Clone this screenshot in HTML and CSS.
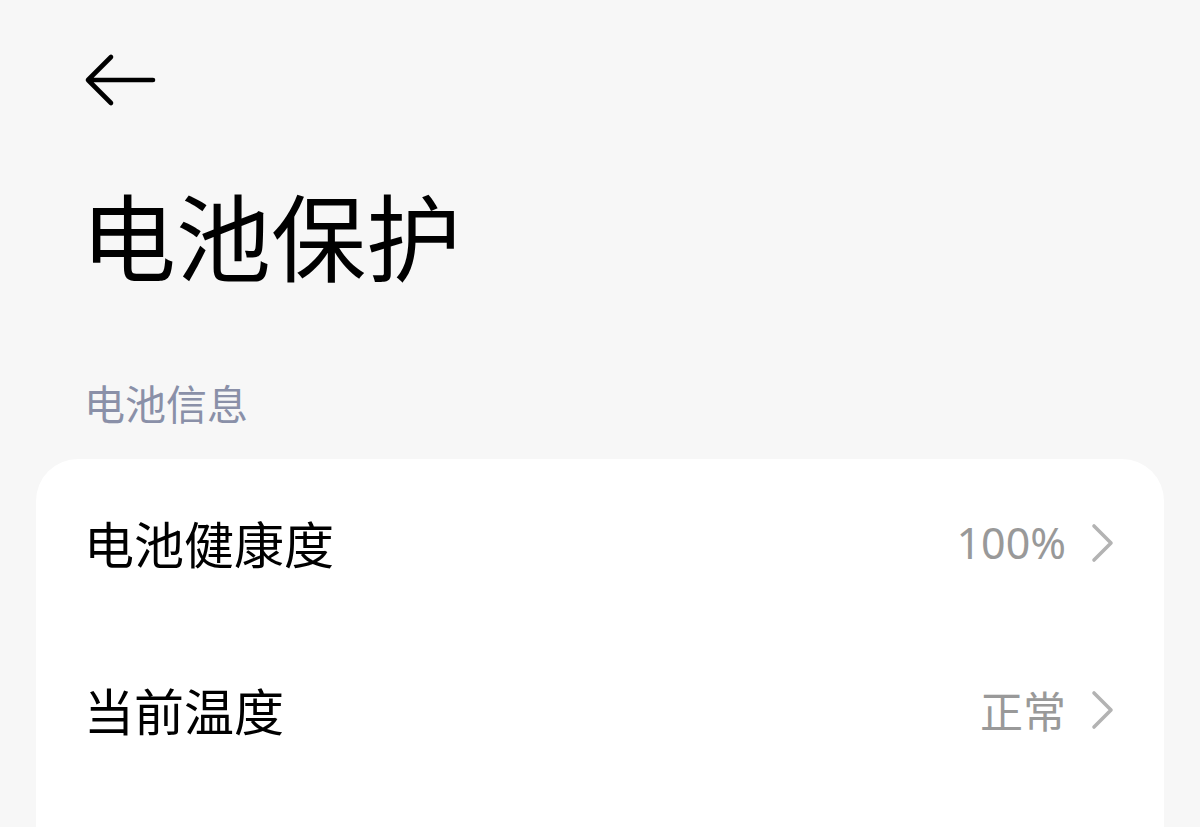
FILE: index.html
```html
<!DOCTYPE html>
<html lang="zh">
<head>
<meta charset="utf-8">
<link rel="stylesheet" href="styles.css">
</head>
<body>
<div class="page">
  <div class="topbar">
    <svg class="back" width="72" height="54" viewBox="0 0 72 54">
      <path d="M27 4 L4 27 L27 50 M4 27 L69 27" fill="none" stroke="#000" stroke-width="4.6" stroke-linecap="round" stroke-linejoin="round"/>
    </svg>
  </div>
  <h1 class="title">电池保护</h1>
  <div class="section-label">电池信息</div>
  <div class="card">
    <div class="row">
      <span class="row-label">电池健康度</span>
      <span class="row-value">100%
        <svg class="chev" width="26" height="40" viewBox="0 0 26 40"><path d="M4 3 L21 20 L4 37" fill="none" stroke="#b3b3b3" stroke-width="3.6" stroke-linecap="round" stroke-linejoin="round"/></svg>
      </span>
    </div>
    <div class="row">
      <span class="row-label">当前温度</span>
      <span class="row-value">正常
        <svg class="chev" width="26" height="40" viewBox="0 0 26 40"><path d="M4 3 L21 20 L4 37" fill="none" stroke="#b3b3b3" stroke-width="3.6" stroke-linecap="round" stroke-linejoin="round"/></svg>
      </span>
    </div>
  </div>
</div>
</body>
</html>
```
FILE: styles.css
```css
html, body {
  margin: 0;
  padding: 0;
  background: #f7f7f7;
  overflow: hidden;
}
body {
  font-family: "Noto Sans", "Noto Sans CJK SC", sans-serif;
  width: 1200px;
  height: 827px;
}
.page {
  display: flex;
  flex-direction: column;
}
.topbar {
  padding: 53px 0 0 84px;
  height: 54px;
}
.back {
  display: block;
}
.title {
  margin: 76px 0 0 81px;
  font-size: 95px;
  font-weight: 400;
  line-height: 110px;
  color: #000;
}
.section-label {
  margin: 86px 0 0 84px;
  font-size: 41px;
  line-height: 50px;
  color: #8a90a8;
}
.card {
  margin: 30px 36px 0 36px;
  background: #fff;
  border-radius: 42px 42px 0 0;
  height: 368px;
}
.row {
  height: 167px;
  display: flex;
  align-items: center;
  justify-content: space-between;
  padding: 0 48px 0 48px;
}
.row-label {
  font-size: 50px;
  color: #000;
}
.row-value {
  display: flex;
  align-items: center;
  gap: 24px;
  font-size: 43px;
  color: #999;
}
.chev {
  display: block;
}
```
